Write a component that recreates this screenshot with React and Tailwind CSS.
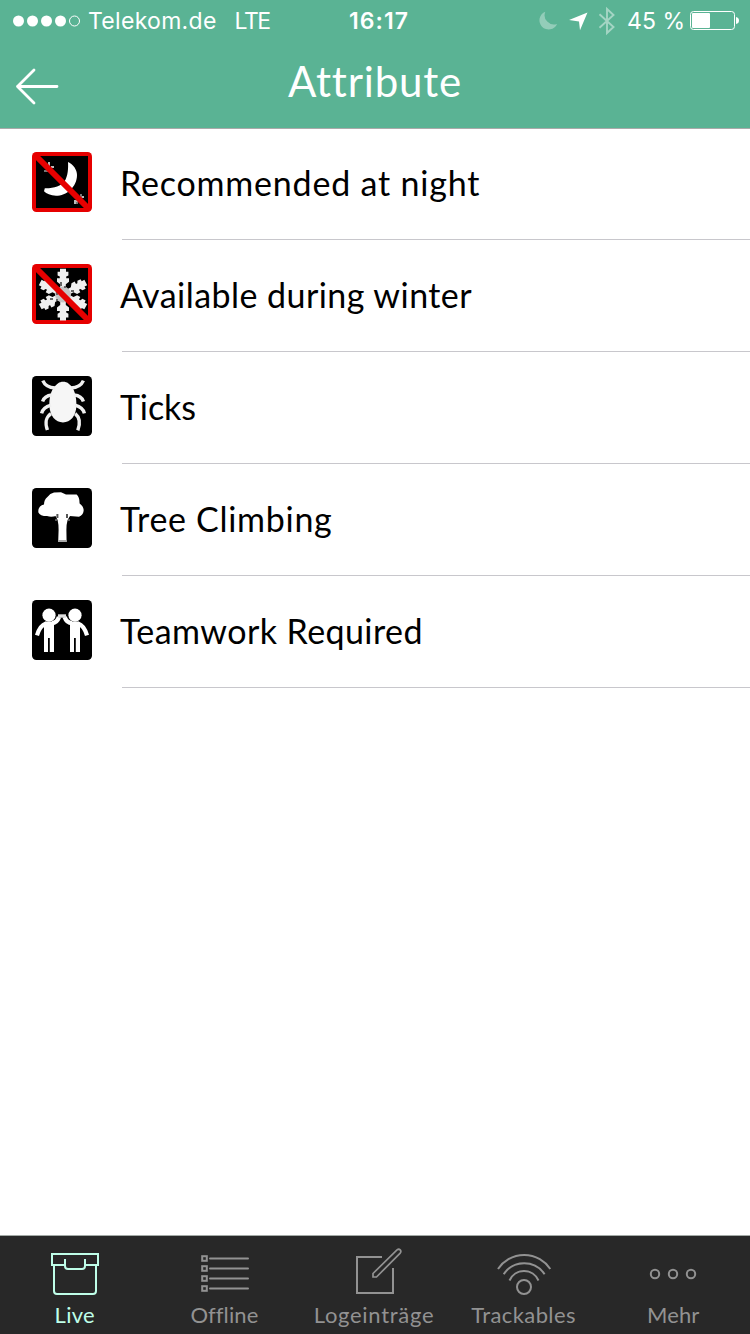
import React, { useState } from 'react'

const Moon = () => (
  <>
    <path d="M18 5 C20.6 6.2 22.5 8.8 22.5 11.5 C22.5 17.5 17.2 21.9 12 21.9 C9.3 21.7 7.2 20.8 6 19.6 L6.4 18.1 C11 18.2 14.5 17 16.3 14.6 C18 12 18.2 8 18 5Z" fill="#fff" />
    <path d="M8 5h1v2H8z M9.500 7h1.500v1H9.500z M22 22h1v1h-1z M25 22h1v1h-1z M21 24h2v2h-2z" fill="#bbb" />
    <path d="M6.500 7h1v1h-1z M6 9h2v1H6z M24 21h1v2h-1z M22 25h1v1h-1z" fill="#777" />
  </>
)

const Snowflake = () => (
  <>
    <g fill="#f0f0f0">
      {[0, 62, 118, 180, 242, 298].map((angle) => (
        <path
          key={angle}
          transform={`translate(15.500 15.300) rotate(${angle})`}
          d="M-1.400 0V-5.200L-3 -6.400V-8.200L-1.600 -8.200V-9L-2.700 -9.600V-11.400H-1.500V-12.900H1.500V-11.400H2.700V-9.600L1.600 -9V-8.200H3V-6.400L1.400 -5.200V0z"
        />
      ))}
    </g>
    <circle cx="15.500" cy="15.300" r="4" fill="#c4c4c4" />
    <path d="M14 9h1v2h-1z M12 14h1v1.500h-1z M17 17h1v2h-1z M9 17h1.500v1H9z M19.500 13h1.500v1h-1.500z M16 11h1v1h-1z M12 17.500h1v1h-1z" fill="#666" />
  </>
)

const Tick = () => (
  <>
    <path d="M15.600 2.900 C17.800 2.900 18.600 4 19.800 5.300 C21.500 7.500 22.300 11 22.200 15 C22 20 19.300 23.200 15.500 23.200 C11.700 23.200 9 20 8.700 15 C8.600 11 9.300 7.500 11.400 5.300 C12.500 4 13.400 2.900 15.600 2.900Z" fill="#f6f6f6" />
    <g fill="none" stroke="#f0f0f0" strokeWidth="1.700">
      <path d="M5.400 2.300 C6.400 4.600 8.200 5.800 11.500 6 M25.700 2.300 C24.700 4.600 22.800 5.800 19.500 6" />
      <path d="M5.300 12.700 C6 10.500 7.500 9.800 10 9.500 M25.700 12.700 C25 10.500 23.500 9.800 21 9.500" />
      <path d="M4.800 18.700 C5.300 16.400 7 15.300 9.500 14.600 M26.200 18.700 C25.700 16.400 24 15.300 21.500 14.600" />
      <path d="M7.700 27 C6.400 23.200 6.700 20.800 9.500 18.800 M22.900 27.200 C24.400 23.200 24 20.800 21.600 18.800" />
    </g>
  </>
)

const Tree = () => (
  <>
    <path d="M11 2.200 L14.500 2.100 17 3.200 22.300 3.300 Q23.800 4.500 23.800 7.700 Q26 9.300 25.800 11.500 Q25.500 13.600 23.500 14.400 L18.800 14 12 14 Q9.500 14.800 7.500 14 Q4 14 3.200 12.200 Q2.800 9 6 8.200 Q6 6 7.700 4.500 Q9 2.600 11 2.200Z" fill="#fff" />
    <path d="M11.500 13.500h7.800l-1.500 2.500q-.6 2-.6 5l.1 6h-4.200l.2-6q0-3-.5-5z" fill="#fff" />
    <path d="M12.200 13h1v2h-1z M17 13h1v2h-1z M11.500 15.500h1v1h-1z M18 15.500h1v1h-1z" fill="#555" />
    <path d="M13 26h4.200v1H13z" fill="#aaa" />
  </>
)

const Team = () => (
  <>
    <g fill="#fff">
      <circle cx="8.500" cy="7.600" r="3.300" />
      <circle cx="21.500" cy="7.600" r="3.300" />
      <path d="M6.500 10.800h4.500v15.200H8.900v-7H8v7H6v-14z M19 10.800h4.500l.5 1.200v14h-2.100v-7H21v7h-2z" />
    </g>
    <g fill="none" stroke="#fff">
      <path d="M7 11.800 C4.800 12.500 3.600 14 2.500 17.700 M23 11.800 C25.200 12.500 26.400 14 27.500 17.700" strokeWidth="2.100" />
      <path d="M10 11.500 C12 11.500 12.800 10.500 13.500 8.500 M20 11.500 C18 11.500 17 10.500 16.300 8.500" strokeWidth="2.200" />
      <path d="M13 8h4" strokeWidth="1.700" stroke="#ddd" />
    </g>
  </>
)

const attributes = [
  { name: 'Recommended at night', icon: Moon, negated: true, text: 'tracking-[0.8px]' },
  { name: 'Available during winter', icon: Snowflake, negated: true, text: 'tracking-[0.45px]' },
  { name: 'Ticks', icon: Tick, text: 'tracking-[-0.1px]' },
  { name: 'Tree Climbing', icon: Tree, text: 'tracking-[0.7px]' },
  { name: 'Teamwork Required', icon: Team, text: 'tracking-[0.42px]' },
]

function AttributeIcon({ icon: Icon, negated }) {
  return (
    <svg viewBox="0 0 30 30" className="w-[60px] h-[60px] shrink-0">
      <rect width="30" height="30" rx="2.200" fill={negated ? '#e60000' : '#000'} />
      {negated && <rect x="2" y="2" width="26" height="26" fill="#000" />}
      <Icon />
      {negated && <path d="M2 2L28 28" stroke="#e60000" strokeWidth="3" />}
    </svg>
  )
}

const BoxIcon = () => (
  <svg width="60" height="52" viewBox="45 1246 60 52" fill="none" stroke="currentColor" strokeWidth="2">
    <path d="M65 1265H52v-11h46v11H85" />
    <path d="M54 1265v26q0 3 3 3h36q3 0 3-3v-26" />
    <path d="M65 1259v7q0 3 3 3h14q3 0 3-3v-7" />
  </svg>
)

const ListIcon = () => (
  <svg width="60" height="52" viewBox="194 1246 60 52" fill="none" stroke="currentColor" strokeWidth="2">
    {[1258.5, 1268.5, 1278.5, 1288.5].map((y) => (
      <g key={y}>
        <rect x="202.200" y={y - 2.3} width="4.600" height="4.600" />
        <path d={`M210 ${y}h38`} strokeLinecap="round" />
      </g>
    ))}
  </svg>
)

const EditIcon = () => (
  <svg width="60" height="52" viewBox="344 1246 60 52" fill="none" stroke="currentColor" strokeWidth="2">
    <path d="M382 1257h-25v36h36v-25" />
    <path d="M373 1277v-3.500l24-23.600q1.800-1.300 3.200 0 1.300 1.500 0 3.200l-23.700 23.900z" strokeWidth="1.700" />
  </svg>
)

const SignalIcon = () => (
  <svg width="60" height="52" viewBox="494 1246 60 52" fill="none" stroke="currentColor" strokeWidth="2">
    <path d="M498 1269A31.500 31.500 0 0 1 550.300 1269" />
    <path d="M503.700 1274.300A24.400 24.400 0 0 1 544.600 1274.300" />
    <path d="M509.500 1280.500A15.800 15.800 0 0 1 538.500 1280.500" />
    <circle cx="524" cy="1287" r="7" />
  </svg>
)

const MoreIcon = () => (
  <svg width="60" height="52" viewBox="643 1246 60 52" fill="none" stroke="currentColor" strokeWidth="2">
    <circle cx="655" cy="1274" r="4.200" />
    <circle cx="673" cy="1274" r="4.200" />
    <circle cx="691" cy="1274" r="4.200" />
  </svg>
)

const tabs = [
  { id: 'live', label: 'Live', icon: BoxIcon, text: 'tracking-[0.3px]' },
  { id: 'offline', label: 'Offline', icon: ListIcon, text: 'tracking-[0.1px]' },
  { id: 'logs', label: 'Logeinträge', icon: EditIcon, text: 'tracking-[0.7px]' },
  { id: 'trackables', label: 'Trackables', icon: SignalIcon, text: 'tracking-[0.4px]' },
  { id: 'more', label: 'Mehr', icon: MoreIcon, text: 'tracking-[0.1px]' },
]

function StatusBar() {
  return (
    <div className="grid grid-cols-[1fr_auto_1fr] items-center h-[41px] pt-px pl-[13px] pr-[11px] font-['Inter',sans-serif] text-[23px] leading-10">
      <div className="flex items-center">
        <svg width="68" height="12" viewBox="0 0 68 12" fill="#fff">
          {[5.5, 19.5, 33.5, 47.5].map((x) => (
            <circle key={x} cx={x} cy="6" r="5.500" />
          ))}
          <circle cx="61.500" cy="6" r="5" fill="none" stroke="#fff" />
        </svg>
        <span className="ml-[7px] tracking-[0.3px]">Telekom.de</span>
        <span className="ml-[18px] tracking-[-1.500px]">LTE</span>
      </div>
      <span className="ml-1.5 font-semibold tracking-[1.100px]">16:17</span>
      <div className="flex items-center justify-end">
        <svg width="80" height="30" viewBox="538 5 80 30" fill="#fff">
          <path d="M546.300 10.700a9.200 9.200 0 1 0 11.800 12.200 9.300 9.300 0 0 1-11.800-12.200z" opacity=".35" />
          <path d="M588.500 11.500L581 29.300 580 20.500l-10-1.500z" />
          <path d="M600.500 13.300l14 12.700-6.500 6V8l6.500 6-14 12.700" fill="none" stroke="#fff" strokeWidth="1.900" opacity=".45" />
        </svg>
        <span className="ml-2.5 whitespace-nowrap">45 %</span>
        <svg className="ml-[5px] shrink-0" width="49" height="20" viewBox="0 0 49 20">
          <rect x=".500" y=".500" width="44" height="18" rx="3" fill="none" stroke="#fff" />
          <rect x="2" y="2" width="18" height="15" rx="1" fill="#fff" />
          <path d="M46 6q3 .5 3 3.500t-3 3.500z" fill="#fff" />
        </svg>
      </div>
    </div>
  )
}

export default function App() {
  const [activeTab, setActiveTab] = useState('live')

  return (
    <div className="flex flex-col h-screen w-full overflow-hidden bg-white font-['Lato',sans-serif]">
      <header className="h-32 shrink-0 bg-[#5ab394] text-white shadow-[0_1px_0_#aaaaaa]">
        <StatusBar />
        <div className="grid grid-cols-[75px_1fr_75px] h-[87px]">
          <button className="pl-[15px] pt-[26px] flex items-start">
            <svg width="44" height="40" viewBox="0 0 44 40" fill="none" stroke="#fff" strokeWidth="2.800" strokeLinecap="round" strokeLinejoin="round">
              <path d="M42 19.500H2.500 M19 3L2.500 19.500 19 36" />
            </svg>
          </button>
          <h1 className="text-center text-[42px] leading-[80px] tracking-[0.8px]">Attribute</h1>
        </div>
      </header>

      <ul className="flex-1">
        {attributes.map((attr) => (
          <li key={attr.name} className="flex h-28 pl-8">
            <div className="pt-6">
              <AttributeIcon icon={attr.icon} negated={attr.negated} />
            </div>
            <div className="flex-1 ml-[30px] border-b border-[#c8c7cc]">
              <span className={`block -ml-0.5 text-[34px] leading-[110px] text-black whitespace-nowrap ${attr.text}`}>{attr.name}</span>
            </div>
          </li>
        ))}
      </ul>

      <nav className="grid grid-cols-5 h-[99px] pr-0.5 shrink-0 bg-[#282828] border-t border-[#a3aaa6]">
        {tabs.map(({ id, label, icon: Icon, text }) => (
          <button
            key={id}
            onClick={() => setActiveTab(id)}
            className={`flex flex-col items-center pt-2.5 ${activeTab === id ? 'text-[#bfffe9]' : 'text-[#929292]'}`}
          >
            <Icon />
            <span className={`mt-[3px] text-[22px] leading-7 whitespace-nowrap ${text}`}>{label}</span>
          </button>
        ))}
      </nav>
    </div>
  )
}
